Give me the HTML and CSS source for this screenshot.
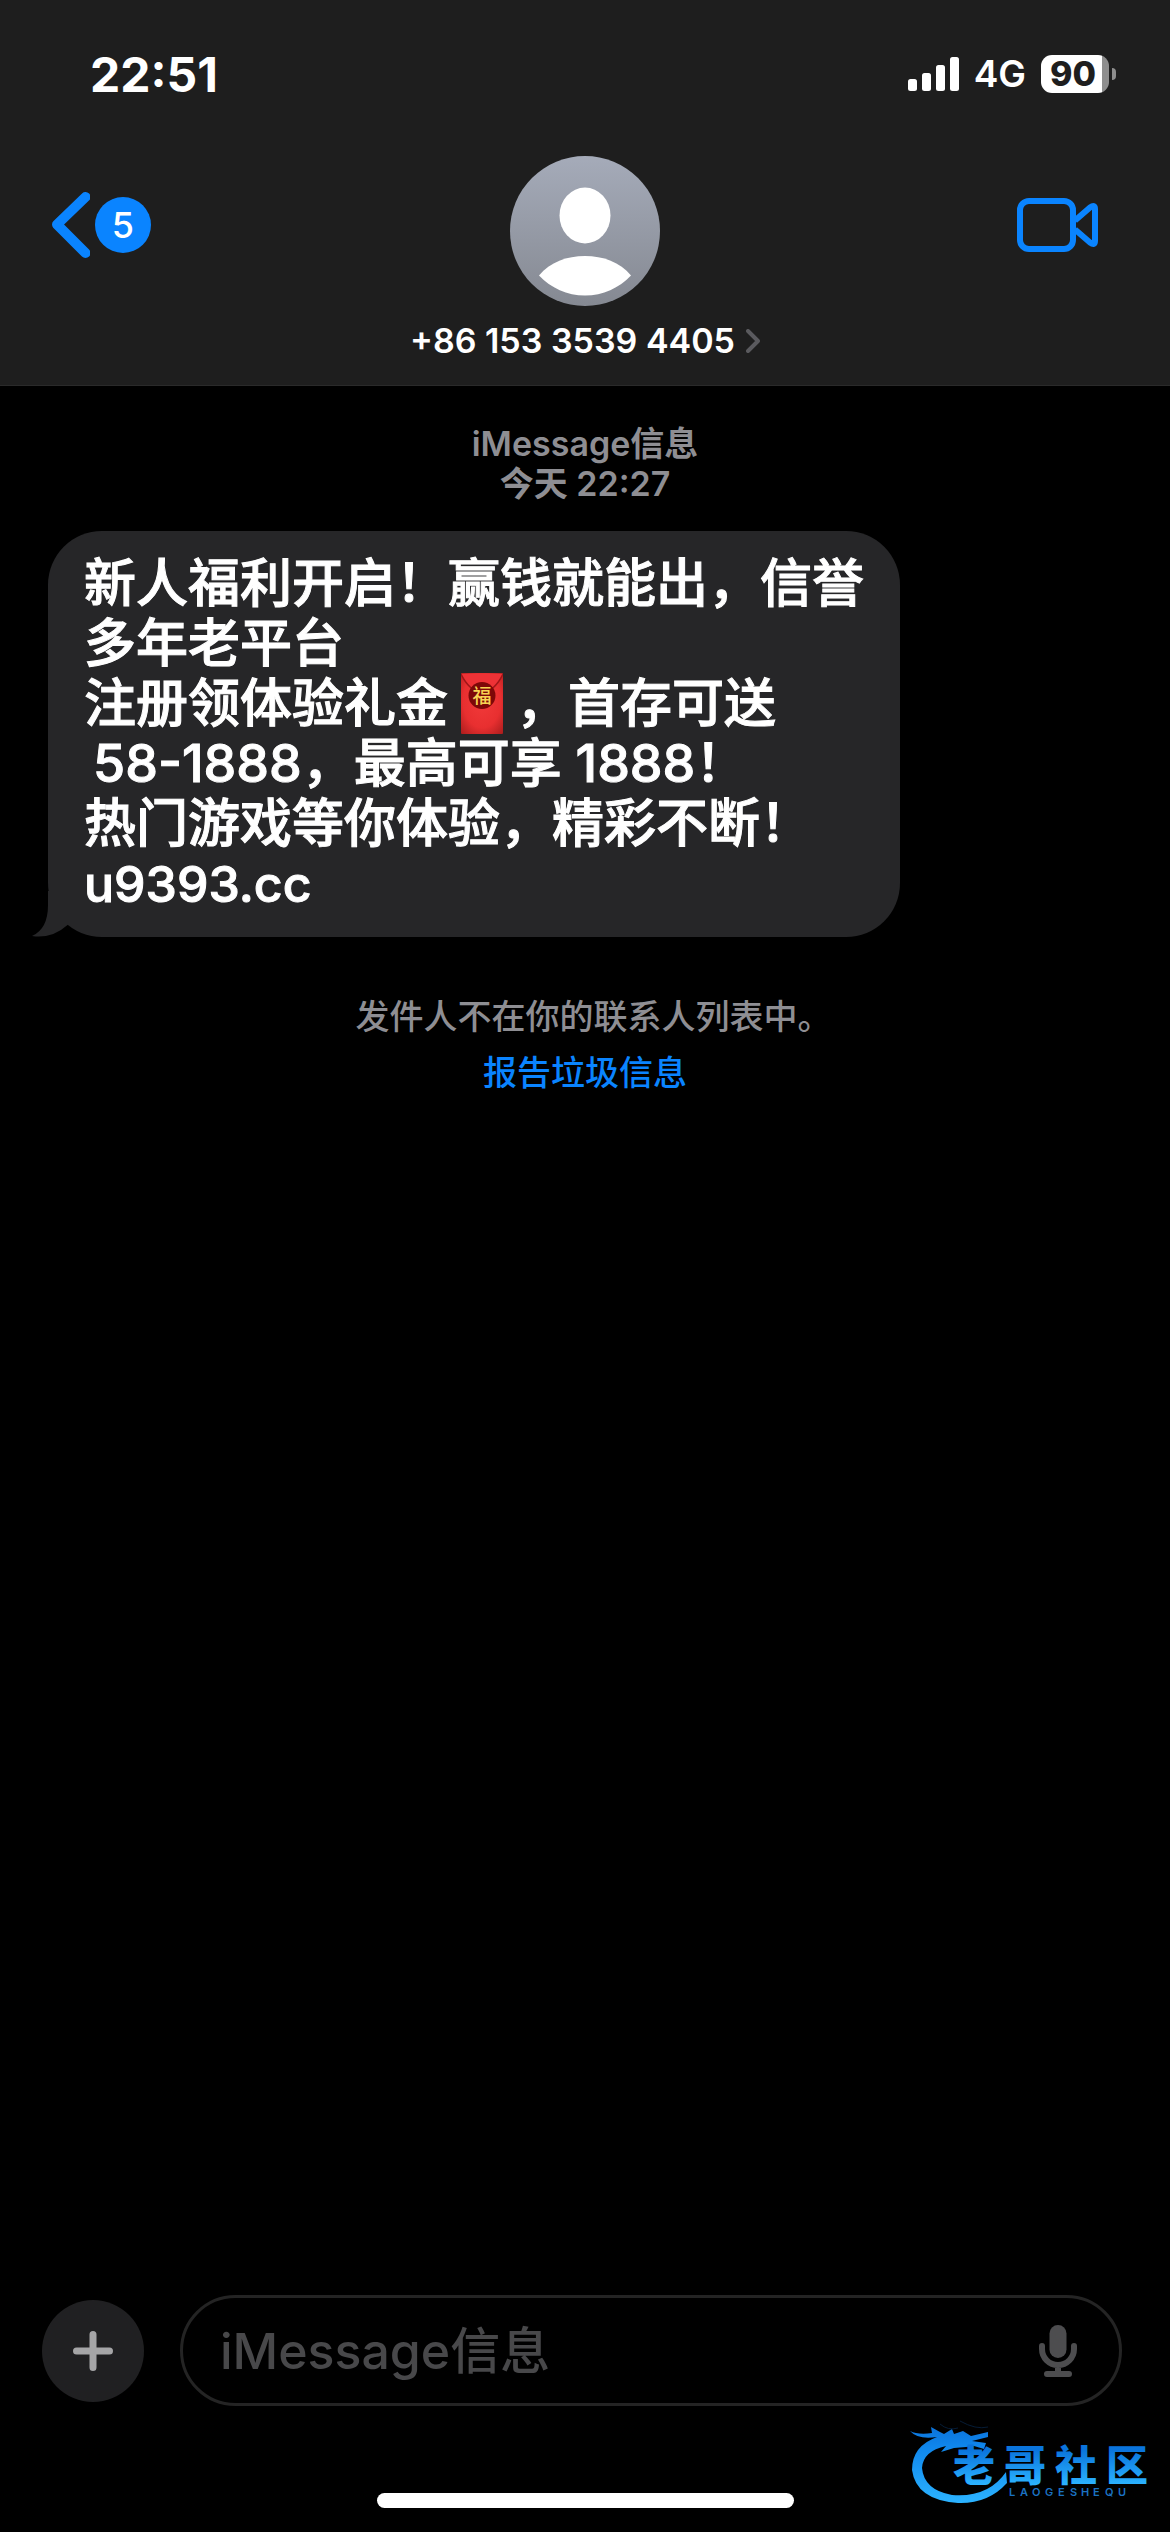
FILE: index.html
```html
<!DOCTYPE html>
<html lang="zh-CN">
<head>
<meta charset="utf-8">
<meta name="viewport" content="width=device-width, initial-scale=1">
<title>+86 153 3539 4405</title>
<link rel="stylesheet" href="styles.css">
</head>
<body>
<div class="screen">
  <header class="header">
    <div class="status">
      <time class="clock">22:51</time>
      <div class="status-right">
        <svg class="signal" viewBox="0 0 51 34" aria-hidden="true"><rect y="22" width="9" height="12" rx="2.5"/><rect x="14" y="16" width="9" height="18" rx="2.5"/><rect x="28" y="8" width="9" height="26" rx="2.5"/><rect x="42" width="9" height="34" rx="2.5"/></svg>
        <span class="network">4G</span>
        <span class="battery"><span class="battery-level">90</span></span>
      </div>
    </div>
    <nav class="nav">
      <button class="back" type="button" aria-label="返回">
        <svg class="back-icon" viewBox="0 0 38 66" aria-hidden="true"><path d="M33.500 5 L5 32.500 L33.500 61"/></svg>
        <span class="badge">5</span>
      </button>
      <button class="contact" type="button">
        <svg class="avatar" viewBox="0 0 150 150" aria-hidden="true">
          <defs><linearGradient id="avatar-bg" x1="0" y1="0" x2="0" y2="1"><stop offset="0" stop-color="#a5abb9"/><stop offset="1" stop-color="#858992"/></linearGradient></defs>
          <circle cx="75" cy="75" r="75" fill="url(#avatar-bg)"/>
          <ellipse cx="75" cy="59.500" rx="25.500" ry="28" fill="#fff"/>
          <path d="M29 119.500 C40 106 57 100 75 100 S110 106 121 119.500 C109 132 93 139.500 75 139.500 S41 132 29 119.500 Z" fill="#fff"/>
        </svg>
        <span class="contact-name">+86 153 3539 4405
          <svg class="disclosure" viewBox="0 0 14 24" aria-hidden="true"><path d="M2 2 L12 12 L2 22"/></svg>
        </span>
      </button>
      <button class="video" type="button" aria-label="视频通话">
        <svg class="video-icon" viewBox="0 0 81 54" aria-hidden="true"><rect x="3" y="3" width="53" height="48" rx="9"/><path d="M58 22.500 L73 9.500 Q78 6 78 11 V43 Q78 48 73 44.500 L58 31.500"/></svg>
      </button>
    </nav>
  </header>

  <main class="thread">
    <p class="stamp">iMessage信息<br>今天 22:27</p>
    <div class="bubble">
      <svg class="tail" viewBox="0 0 50 46" aria-hidden="true"><path d="M16 0 V14 Q16 38 0 45 Q20 48 35.500 34 L50 20 V0 Z"/></svg>
      <p class="message">新人福利开启！赢钱就能出，信誉<br>多年老平台<br>注册领体验礼金<svg class="envelope" viewBox="0 0 42 61" role="img" aria-label="红包"><defs><radialGradient id="envelope-red" cx=".5" cy=".45" r=".75"><stop offset="0" stop-color="#f23a3a"/><stop offset=".6" stop-color="#e82f30"/><stop offset="1" stop-color="#a81c1c"/></radialGradient></defs><rect width="42" height="61" rx="1" fill="url(#envelope-red)"/><path d="M0 1 H42 Q33 18 21 18 T0 1Z" fill="#ee3236"/><path d="M0 1 Q9 19 21 19 T42 1" fill="none" stroke="#a01618" stroke-width="1.500"/><circle cx="21" cy="22.500" r="13.500" fill="#7d0808"/><text x="21" y="29.500" text-anchor="middle" class="seal">福</text></svg>，首存可送<br>&thinsp;58-1888，最高可享 1888！<br>热门游戏等你体验，精彩不断！<br><span class="domain">u9393.cc</span></p>
    </div>
    <p class="notice">发件人不在你的联系人列表中<span class="stop">。</span></p>
    <a class="report" href="#report">报告垃圾信息</a>
  </main>

  <footer class="footer">
    <form class="composer">
      <button class="plus" type="button" aria-label="添加"><svg class="plus-icon" viewBox="0 0 40 40" aria-hidden="true"><path d="M20 3.500 V36.500 M3.500 20 H36.500"/></svg></button>
      <div class="field">
        <input class="field-input" type="text" aria-label="信息" placeholder="iMessage信息">
        <button class="mic" type="button" aria-label="听写"><svg class="mic-icon" viewBox="0 0 38 52" aria-hidden="true"><rect x="10.500" y="0" width="17" height="33" rx="8.500"/><path d="M3 21 V24 A16 16 0 0 0 35 24 V21 M19 41 V48 M8 49 H30"/></svg></button>
      </div>
    </form>
    <div class="home-bar"></div>
    <svg class="watermark" viewBox="0 0 244 88" role="img" aria-label="老哥社区 LAOGESHEQU">
      <defs>
        <linearGradient id="mark-blue" gradientUnits="userSpaceOnUse" x1="0" y1="32" x2="0" y2="66"><stop offset="0" stop-color="#0a74dc"/><stop offset="1" stop-color="#2bb2ff"/></linearGradient>
        <linearGradient id="dragon-blue" gradientUnits="userSpaceOnUse" x1="0" y1="5" x2="0" y2="84"><stop offset="0" stop-color="#0b6fd6"/><stop offset=".3" stop-color="#0f86ec"/><stop offset="1" stop-color="#2bb2ff"/></linearGradient>
      </defs>
      <path fill="url(#dragon-blue)" d="M0 13 Q8 17 22 15 L21 9 L30 14 L34 16 L42 11 L44 16 L53 13 L61 18 L78 14 L78 19 L62 23 L76 25 L74 31 L64 28 L56 29 L44 30 L31 34 L36 28 Q13 33 12 50 Q14 72 42 77 Q78 80 96 54 L97 65 Q78 86 48 85 Q6 82 2 52 Q2 28 27 19 Q8 22 0 13 Z"/>
      <path fill="none" stroke="#061c36" stroke-width="1" d="M30 6 Q38 13 48 10 M50 3 Q66 12 78 9"/>
      <text class="mark-name" y="63" x="43 94 145 196">老哥社区</text>
      <text class="mark-latin" y="78" x="99 110 122 135 148 160 171 183 195 208">LAOGESHEQU</text>
    </svg>
  </footer>
</div>
</body>
</html>
```

FILE: styles.css
```css
* { box-sizing: border-box; }

body {
  margin: 0;
  background: #000;
  color: #fff;
  font-family: Inter, "Noto Sans CJK SC", sans-serif;
}

p { margin: 0; }

button {
  padding: 0;
  border: 0;
  background: none;
  color: inherit;
  font: inherit;
}

.screen {
  display: flex;
  flex-direction: column;
  min-height: 100vh;
}

/* Header */
.header {
  padding: 46px 0 24px;
  background: #1e1e1e;
  border-bottom: 1px solid #2a2a2a;
}

.status {
  display: flex;
  justify-content: space-between;
  align-items: center;
  height: 56px;
  padding: 0 54px 0 90px;
}

.clock { font-size: 48px; font-weight: 700; }

.status-right { display: flex; align-items: center; gap: 15px; }

.signal { width: 51px; height: 34px; fill: #fff; }

.network { font-size: 37px; font-weight: 600; line-height: 40px; }

.battery { display: flex; align-items: center; gap: 3px; }

.battery::after {
  content: "";
  width: 4px;
  height: 12px;
  border-radius: 0 6px 6px 0;
  background: #8e8e8e;
}

.battery-level {
  width: 68px;
  height: 38px;
  padding-right: 4px;
  border-radius: 11px;
  background: linear-gradient(to right, #fff 61px, #8e8e8e 61px);
  color: #1e1e1e;
  font-size: 34px;
  font-weight: 800;
  line-height: 38px;
  text-align: center;
}

.nav {
  display: grid;
  grid-template-columns: 1fr auto 1fr;
  align-items: start;
  padding-top: 54px;
}

.back {
  display: flex;
  align-items: center;
  gap: 5px;
  padding: 36px 0 0 52px;
}

.back-icon {
  width: 38px;
  height: 66px;
  fill: none;
  stroke: #0a84ff;
  stroke-width: 10;
  stroke-linecap: round;
  stroke-linejoin: round;
}

.badge {
  width: 56px;
  height: 56px;
  border-radius: 50%;
  background: #0a84ff;
  font-size: 36px;
  font-weight: 500;
  line-height: 56px;
  text-align: center;
}

.contact { display: flex; flex-direction: column; align-items: center; gap: 15px; }

.avatar { width: 150px; height: 150px; }

.contact-name {
  display: flex;
  align-items: center;
  gap: 11px;
  font-size: 34px;
  font-weight: 600;
  line-height: 40px;
}

.disclosure {
  width: 14px;
  height: 24px;
  fill: none;
  stroke: #5a5a5e;
  stroke-width: 4;
  stroke-linecap: round;
  stroke-linejoin: round;
}

.video { justify-self: end; padding: 42px 72px 0 0; }

.video-icon {
  display: block;
  width: 81px;
  height: 54px;
  fill: none;
  stroke: #0a84ff;
  stroke-width: 6;
  stroke-linejoin: round;
}

/* Conversation */
.thread {
  display: flex;
  flex: 1;
  flex-direction: column;
  align-items: center;
  padding: 38px 48px 0;
}

.stamp {
  color: #8e8e93;
  font-size: 34px;
  font-weight: 600;
  line-height: 40px;
  text-align: center;
}

.bubble {
  position: relative;
  align-self: flex-start;
  margin-top: 27px;
  padding: 23px 36px;
  border-radius: 54px;
  background: #262628;
}

.tail {
  position: absolute;
  left: -16px;
  bottom: 0;
  width: 50px;
  height: 46px;
  fill: #262628;
}

.message {
  font-size: 52px;
  font-weight: 500;
  line-height: 60px;
  -webkit-text-stroke: 1px currentColor;
}

.domain { font-size: 50px; }

.envelope {
  width: 42px;
  height: 61px;
  margin: -10px 13px 0 13px;
  vertical-align: -12px;
}

.seal {
  fill: #f8d352;
  font-family: "Noto Sans CJK SC", sans-serif;
  font-size: 19px;
  -webkit-text-stroke: 0;
}

.notice {
  margin-top: 60px;
  color: #8e8e93;
  font-size: 34px;
  font-weight: 500;
  line-height: 40px;
}

.stop { font-feature-settings: "halt"; }

.report {
  margin-top: 16px;
  color: #0a84ff;
  font-size: 34px;
  font-weight: 500;
  line-height: 40px;
  text-decoration: none;
}

/* Composer */
.footer { position: relative; padding-bottom: 24px; }

.composer {
  display: flex;
  align-items: center;
  gap: 36px;
  padding: 0 48px 0 42px;
}

.plus {
  display: grid;
  place-items: center;
  width: 102px;
  height: 102px;
  border-radius: 50%;
  background: #202022;
}

.plus-icon {
  width: 40px;
  height: 40px;
  stroke: #a5a5a7;
  stroke-width: 7;
  stroke-linecap: round;
}

.field {
  display: flex;
  flex: 1;
  align-items: center;
  height: 111px;
  padding: 0 42px 0 37px;
  border: 3px solid #242424;
  border-radius: 56px;
}

.field-input {
  flex: 1;
  min-width: 0;
  padding: 0;
  border: 0;
  outline: 0;
  background: none;
  color: #fff;
  font: 500 50px/60px Inter, "Noto Sans CJK SC", sans-serif;
}

.field-input::placeholder { color: #48484a; opacity: 1; }

.mic-icon { display: block; width: 38px; height: 52px; fill: #4d4d4f; }

.mic-icon path { fill: none; stroke: #4d4d4f; stroke-width: 6; stroke-linecap: round; }

.home-bar {
  width: 417px;
  height: 15px;
  margin: 87px auto 0;
  border-radius: 8px;
  background: #fff;
}

.watermark {
  position: absolute;
  right: 16px;
  bottom: 26px;
  width: 244px;
  height: 88px;
}

.mark-name {
  fill: url(#mark-blue);
  font-family: "Noto Sans CJK SC", sans-serif;
  font-size: 42px;
  font-weight: 900;
}

.mark-latin { fill: #1b72c2; font-family: Inter, sans-serif; font-size: 11px; font-weight: 600; }
```
